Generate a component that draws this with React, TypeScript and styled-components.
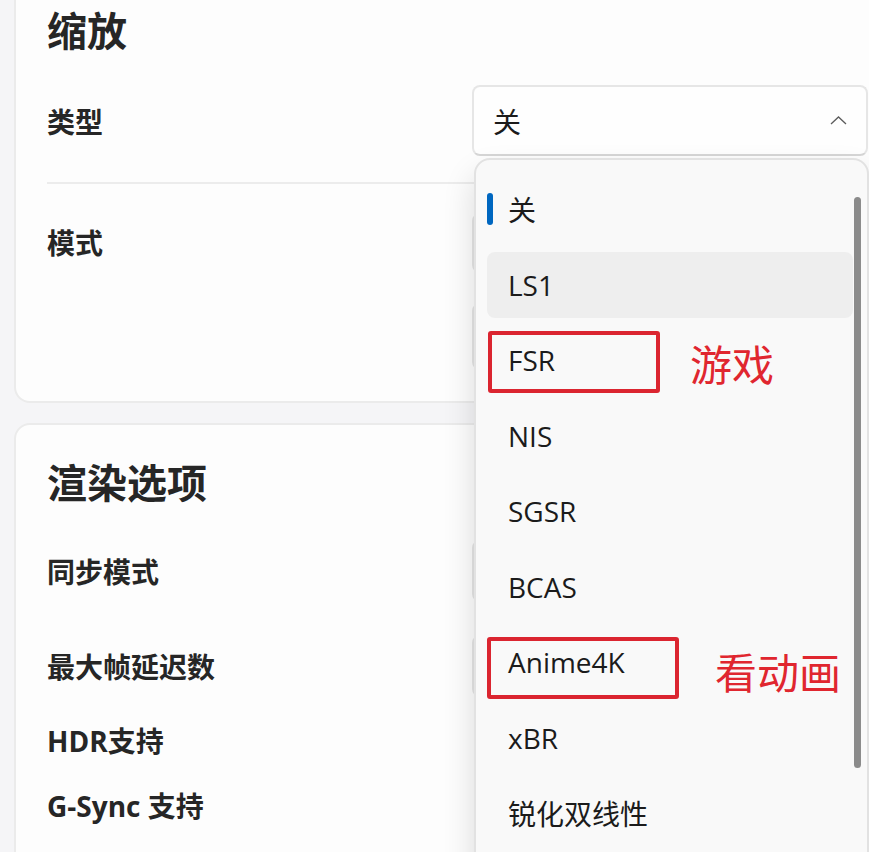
import styled, {createGlobalStyle, css} from 'styled-components';

const GlobalStyle = createGlobalStyle`
  html, body {
    margin: 0;
    background: #f5f5f7;
    overflow: hidden;
  }

  body {
    font-family: "Open Sans", "Noto Sans CJK SC", sans-serif;
    color: #262626;
  }
`;

interface Option {
  label: string;
  note?: {text: string; box: [number, number, number, number]; noteLeft: number; noteShift: number};
}

const OPTIONS: Option[] = [
  {label: '关'},
  {label: 'LS1'},
  {label: 'FSR', note: {text: '游戏', box: [1, 4, 172, 62], noteLeft: 203, noteShift: 2}},
  {label: 'NIS'},
  {label: 'SGSR'},
  {label: 'BCAS'},
  {label: 'Anime4K', note: {text: '看动画', box: [0, 8, 192, 62], noteLeft: 228, noteShift: 8}},
  {label: 'xBR'},
  {label: '锐化双线性'},
];

export default function App() {
  return (
    <>
      <GlobalStyle/>
      <Page>

        {/* Карточка масштабирования */}
        <Card $padBottom={31}>
          <CardTitle>缩放</CardTitle>

          <Row $top={26} $divider>
            <Label>类型</Label>
            <SelectWrap>
              <SelectBox>
                <span>关</span>
                <svg width="17" height="9" viewBox="0 0 17 9">
                  <polyline points="1,8 8.5,1 16,8" fill="none" stroke="#5c5c5c" strokeWidth="1.3"/>
                </svg>
              </SelectBox>

              <Popup>
                {OPTIONS.map((o, i) => (
                  <Item key={o.label} $selected={i === 0} $hover={i === 1}>
                    {o.label}
                    {o.note && (
                      <>
                        <NoteBox style={{
                          left: o.note.box[0], top: o.note.box[1],
                          width: o.note.box[2], height: o.note.box[3],
                        }}/>
                        <NoteText style={{left: o.note.noteLeft, marginTop: o.note.noteShift}}>
                          {o.note.text}
                        </NoteText>
                      </>
                    )}
                  </Item>
                ))}
                <Thumb/>
              </Popup>
            </SelectWrap>
          </Row>

          <Row $top={29} $align="flex-start">
            <Label $lh={60}>模式</Label>
            <ControlStack>
              <Control $h={60}/>
              <Control $h={67}/>
            </ControlStack>
          </Row>
        </Card>

        {/* Карточка рендеринга */}
        <Card $padBottom={60}>
          <CardTitle>渲染选项</CardTitle>

          <Row $top={29}>
            <Label>同步模式</Label>
            <Control $h={62}/>
          </Row>

          <Row $top={33}>
            <Label>最大帧延迟数</Label>
            <Control $h={62}/>
          </Row>

          <Row $top={18} $h={50}>
            <Label>HDR支持</Label>
          </Row>

          <Row $top={15} $h={50}>
            <Label>G-Sync 支持</Label>
          </Row>
        </Card>

      </Page>
    </>
  );
}


const Page = styled.div`
  margin-top: -29px;
  padding-left: 14px;
  display: flex;
  flex-direction: column;
  gap: 20px;
`;

const Card = styled.section<{ $padBottom: number }>`
  box-sizing: border-box;
  width: 889px;
  padding: 30px 33px ${p => p.$padBottom}px 31px;
  background: #fdfdfd;
  border: 2px solid #ebebeb;
  border-radius: 16px;
`;

const CardTitle = styled.h2`
  margin: 0;
  font-size: 40px;
  line-height: 56px;
  font-weight: 700;
  color: #262626;
`;

const Row = styled.div<{ $top: number; $h?: number; $divider?: boolean; $align?: string }>`
  display: flex;
  justify-content: space-between;
  align-items: ${p => p.$align || 'center'};
  margin-top: ${p => p.$top}px;
  ${p => p.$h && css`height: ${p.$h}px;`}
  ${p => p.$divider && css`
    padding-bottom: 26px;
    border-bottom: 2px solid #ececec;
  `}
`;

const Label = styled.div<{ $lh?: number }>`
  font-size: 28px;
  font-weight: 700;
  color: #262626;
  ${p => p.$lh && css`line-height: ${p.$lh}px;`}
`;

const ControlStack = styled.div`
  display: flex;
  flex-direction: column;
  gap: 30px;
`;

const Control = styled.div<{ $h: number }>`
  box-sizing: border-box;
  width: 396px;
  height: ${p => p.$h}px;
  background: #fbfbfb;
  border: 2px solid #e5e5e5;
  border-radius: 8px;
`;

const SelectWrap = styled.div`
  position: relative;
  width: 396px;
  height: 71px;
`;

const SelectBox = styled.div`
  box-sizing: border-box;
  height: 100%;
  display: flex;
  align-items: center;
  justify-content: space-between;
  padding: 0 19px 0 19px;
  background: #fefefe;
  border: 2px solid #e6e6e6;
  border-bottom-color: #d6d6d6;
  border-radius: 8px;
  font-size: 28px;
  color: #1b1b1b;
`;

const Popup = styled.div`
  position: absolute;
  top: 73px;
  left: 2px;
  z-index: 10;
  box-sizing: border-box;
  width: 395px;
  height: 780px;
  padding: 6.5px 0 0 11px;
  overflow: hidden;
  background: #f9f9f9;
  border: 2px solid #e2e2e2;
  border-radius: 16px;
  box-shadow: 0 16px 32px rgba(0, 0, 0, 0.14);
`;

const Item = styled.div<{ $selected?: boolean; $hover?: boolean }>`
  position: relative;
  box-sizing: border-box;
  width: 366px;
  height: 66px;
  margin: 9.5px 0;
  padding-left: 21px;
  display: flex;
  align-items: center;
  border-radius: 8px;
  font-size: 28px;
  color: #1b1b1b;
  background: ${p => p.$hover ? '#eeeeee' : 'transparent'};

  ${p => p.$selected && css`
    &::before {
      content: '';
      position: absolute;
      left: 0;
      top: 17px;
      width: 6px;
      height: 32px;
      border-radius: 3px;
      background: #0067c0;
    }
  `}
`;

const NoteBox = styled.div`
  position: absolute;
  box-sizing: border-box;
  border: 4px solid #db2530;
  border-radius: 3px;
`;

const NoteText = styled.div`
  position: absolute;
  top: 50%;
  transform: translateY(-50%);
  font-family: "Noto Sans CJK SC", sans-serif;
  font-size: 42px;
  font-weight: 400;
  color: #e0262f;
  white-space: nowrap;
`;

const Thumb = styled.div`
  position: absolute;
  top: 37px;
  right: 6px;
  width: 7px;
  height: 571px;
  border-radius: 4px;
  background: #8b8b8b;
`;
